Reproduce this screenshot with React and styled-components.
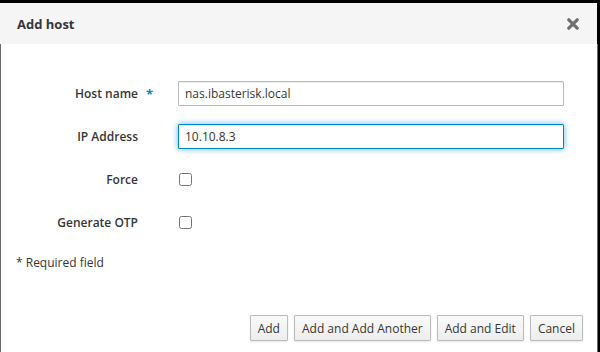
import React from "react";
import styled, { createGlobalStyle } from "styled-components";

const GlobalStyle = createGlobalStyle`
  html, body {
    margin: 0;
    padding: 0;
    background: #000;
    font-family: "Open Sans", "Liberation Sans", sans-serif;
  }
`;

const Modal = styled.div`
  margin-top: 3px;
  width: 598px;
  height: 349px;
  display: flex;
  flex-direction: column;
  background: #fff;
`;

const Header = styled.div`
  flex-shrink: 0;
  height: 41px;
  display: flex;
  align-items: center;
  justify-content: space-between;
  padding: 0 17px 0 17px;
  background: #f5f5f5;
  border-right: 1px solid #000;
`;

const Title = styled.h4`
  margin: 0;
  font-size: 13px;
  font-weight: 700;
  color: #363636;
`;

const Close = styled.button`
  width: 14px;
  height: 14px;
  padding: 0;
  border: none;
  background: none;
  display: flex;
  align-items: center;
  justify-content: center;
  svg {
    display: block;
  }
`;

const Body = styled.div`
  flex: 1;
  display: flex;
  flex-direction: column;
  border-left: 1px solid #6b6b6b;
  border-right: 1px solid #6b6b6b;
`;

const Form = styled.div`
  display: grid;
  grid-template-columns: 137px 40px 386px;
  grid-auto-rows: 43px;
  align-items: center;
  padding-top: 28px;
`;

const Label = styled.label`
  text-align: right;
  font-size: 12px;
  font-weight: 600;
  color: #363636;
`;

const Star = styled.span`
  padding-left: 8px;
  font-size: 13px;
  font-weight: 700;
  color: #0088ce;
`;

const Input = styled.input`
  box-sizing: border-box;
  width: 386px;
  height: 25px;
  padding: 0 6px;
  font-family: inherit;
  font-size: 12px;
  color: #363636;
  border: 1px solid ${(p) => (p.$focused ? "#0088ce" : "#bbb")};
  box-shadow: ${(p) =>
    p.$focused
      ? "inset 0 1px 1px rgba(3,3,3,0.075), 0 0 6px rgba(0,136,206,0.6)"
      : "inset 0 1px 1px rgba(3,3,3,0.075)"};
  border-radius: 1px;
  outline: none;
`;

const Check = styled.input`
  margin: 0 0 0 1px;
  width: 13px;
  height: 13px;
`;

const Required = styled.div`
  margin-top: 10px;
  padding-left: 15px;
  font-size: 12px;
  color: #363636;
`;

const Footer = styled.div`
  margin-top: auto;
  display: flex;
  justify-content: flex-end;
  gap: 6px;
  padding: 0 14px 11px 0;
`;

const Button = styled.button`
  height: 26px;
  padding: 0 7px;
  font-family: inherit;
  font-size: 12px;
  color: #363636;
  background: linear-gradient(#fafafa, #ededed);
  border: 1px solid #bbb;
  border-radius: 1px;
  box-shadow: 0 1px 2px rgba(0, 0, 0, 0.1);
`;

const App = () => {
  return (
    <>
      <GlobalStyle />
      <Modal>
        <Header>
          <Title>Add host</Title>
          <Close aria-label="Close">
            <svg width="12" height="12" viewBox="0 0 12 12">
              <path
                d="M1.8 1.8 L10.2 10.2 M10.2 1.8 L1.8 10.2"
                stroke="#6e6e6e"
                strokeWidth="3.2"
                strokeLinecap="round"
              />
            </svg>
          </Close>
        </Header>
        <Body>
          <Form>
            <Label>Host name</Label>
            <Star>*</Star>
            <Input defaultValue="nas.ibasterisk.local" />
            <Label>IP Address</Label>
            <span />
            <Input defaultValue="10.10.8.3" $focused />
            <Label>Force</Label>
            <span />
            <div>
              <Check type="checkbox" />
            </div>
            <Label>Generate OTP</Label>
            <span />
            <div>
              <Check type="checkbox" />
            </div>
          </Form>
          <Required>* Required field</Required>
          <Footer>
            <Button>Add</Button>
            <Button>Add and Add Another</Button>
            <Button>Add and Edit</Button>
            <Button>Cancel</Button>
          </Footer>
        </Body>
      </Modal>
    </>
  );
};

export default App;
